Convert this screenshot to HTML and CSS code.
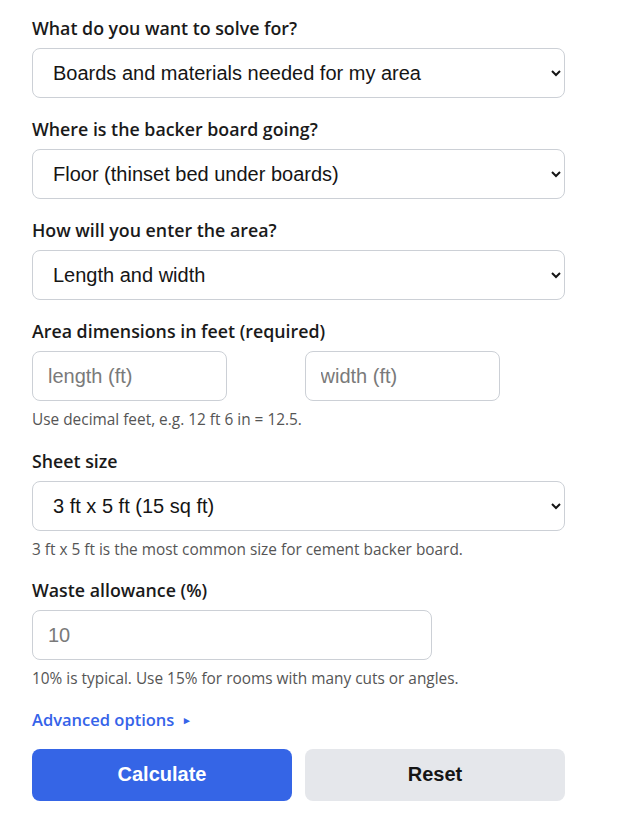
FILE: index.html
```html
<!DOCTYPE html>
<html lang="en">
<head>
<meta charset="utf-8">
<title>Backer Board Calculator</title>
<link rel="stylesheet" href="styles.css">
</head>
<body>
<form class="calc">
  <div class="field">
    <label class="label" for="solve">What do you want to solve for?</label>
    <select id="solve" class="control select">
      <option>Boards and materials needed for my area</option>
    </select>
  </div>
  <div class="field">
    <label class="label" for="where">Where is the backer board going?</label>
    <select id="where" class="control select">
      <option>Floor (thinset bed under boards)</option>
    </select>
  </div>
  <div class="field">
    <label class="label" for="enter">How will you enter the area?</label>
    <select id="enter" class="control select">
      <option>Length and width</option>
    </select>
  </div>
  <div class="field">
    <span class="label">Area dimensions in feet (required)</span>
    <div class="pair">
      <input class="control input short" type="text" placeholder="length (ft)">
      <input class="control input short" type="text" placeholder="width (ft)">
    </div>
    <p class="help">Use decimal feet, e.g. 12 ft 6 in = 12.5.</p>
  </div>
  <div class="field">
    <label class="label" for="sheet">Sheet size</label>
    <select id="sheet" class="control select">
      <option>3 ft x 5 ft (15 sq ft)</option>
    </select>
    <p class="help">3 ft x 5 ft is the most common size for cement backer board.</p>
  </div>
  <div class="field">
    <label class="label" for="waste">Waste allowance (%)</label>
    <input id="waste" class="control input medium" type="text" placeholder="10">
    <p class="help">10% is typical. Use 15% for rooms with many cuts or angles.</p>
  </div>
  <div class="advanced">Advanced options <span class="tri">&#9656;</span></div>
  <div class="actions">
    <button type="button" class="btn primary">Calculate</button>
    <button type="button" class="btn secondary">Reset</button>
  </div>
</form>
</body>
</html>
```
FILE: styles.css
```css
html, body {
  margin: 0;
  padding: 0;
  background: #ffffff;
}
body {
  font-family: "Open Sans", "Noto Sans", sans-serif;
  color: #1a1a1a;
}
.calc {
  width: 533px;
  margin-left: 32px;
  padding-top: 16px;
}
.field {
  margin-bottom: 19px;
}
.label {
  display: block;
  font-size: 17.8px;
  font-weight: 600;
  line-height: 24px;
  margin-bottom: 8px;
  color: #1a1a1a;
}
.control {
  box-sizing: border-box;
  height: 50px;
  border: 1px solid #ccd0d6;
  border-radius: 8px;
  background: #ffffff;
  font-family: "Liberation Sans", Arial, sans-serif;
  font-size: 20px;
  color: #151515;
  margin: 0;
  display: block;
}
.select {
  width: 100%;
  padding: 0 12px 0 16px;
}
.input {
  padding: 0 15px;
}
.input::placeholder {
  color: #7a7a7a;
}
.pair {
  display: grid;
  grid-template-columns: 1fr 1fr;
  gap: 12px;
}
.short {
  width: 195px;
}
.medium {
  width: 400px;
}
.help {
  margin: 9px 0 -0.5px;
  font-size: 15.4px;
  line-height: 20px;
  color: #555555;
}
.advanced {
  font-size: 16.5px;
  font-weight: 600;
  line-height: 24px;
  color: #3563e9;
  margin-top: 1px;
  margin-bottom: 17px;
}
.tri {
  font-size: 11px;
  margin-left: 5px;
  vertical-align: 2px;
}
.actions {
  display: grid;
  grid-template-columns: 1fr 1fr;
  gap: 13px;
}
.btn {
  height: 52px;
  border: none;
  border-radius: 8px;
  font-family: "Liberation Sans", Arial, sans-serif;
  font-size: 20px;
  font-weight: 700;
  cursor: pointer;
}
.primary {
  background: #3565e6;
  color: #ffffff;
}
.secondary {
  background: #e5e7eb;
  color: #151515;
}
```
